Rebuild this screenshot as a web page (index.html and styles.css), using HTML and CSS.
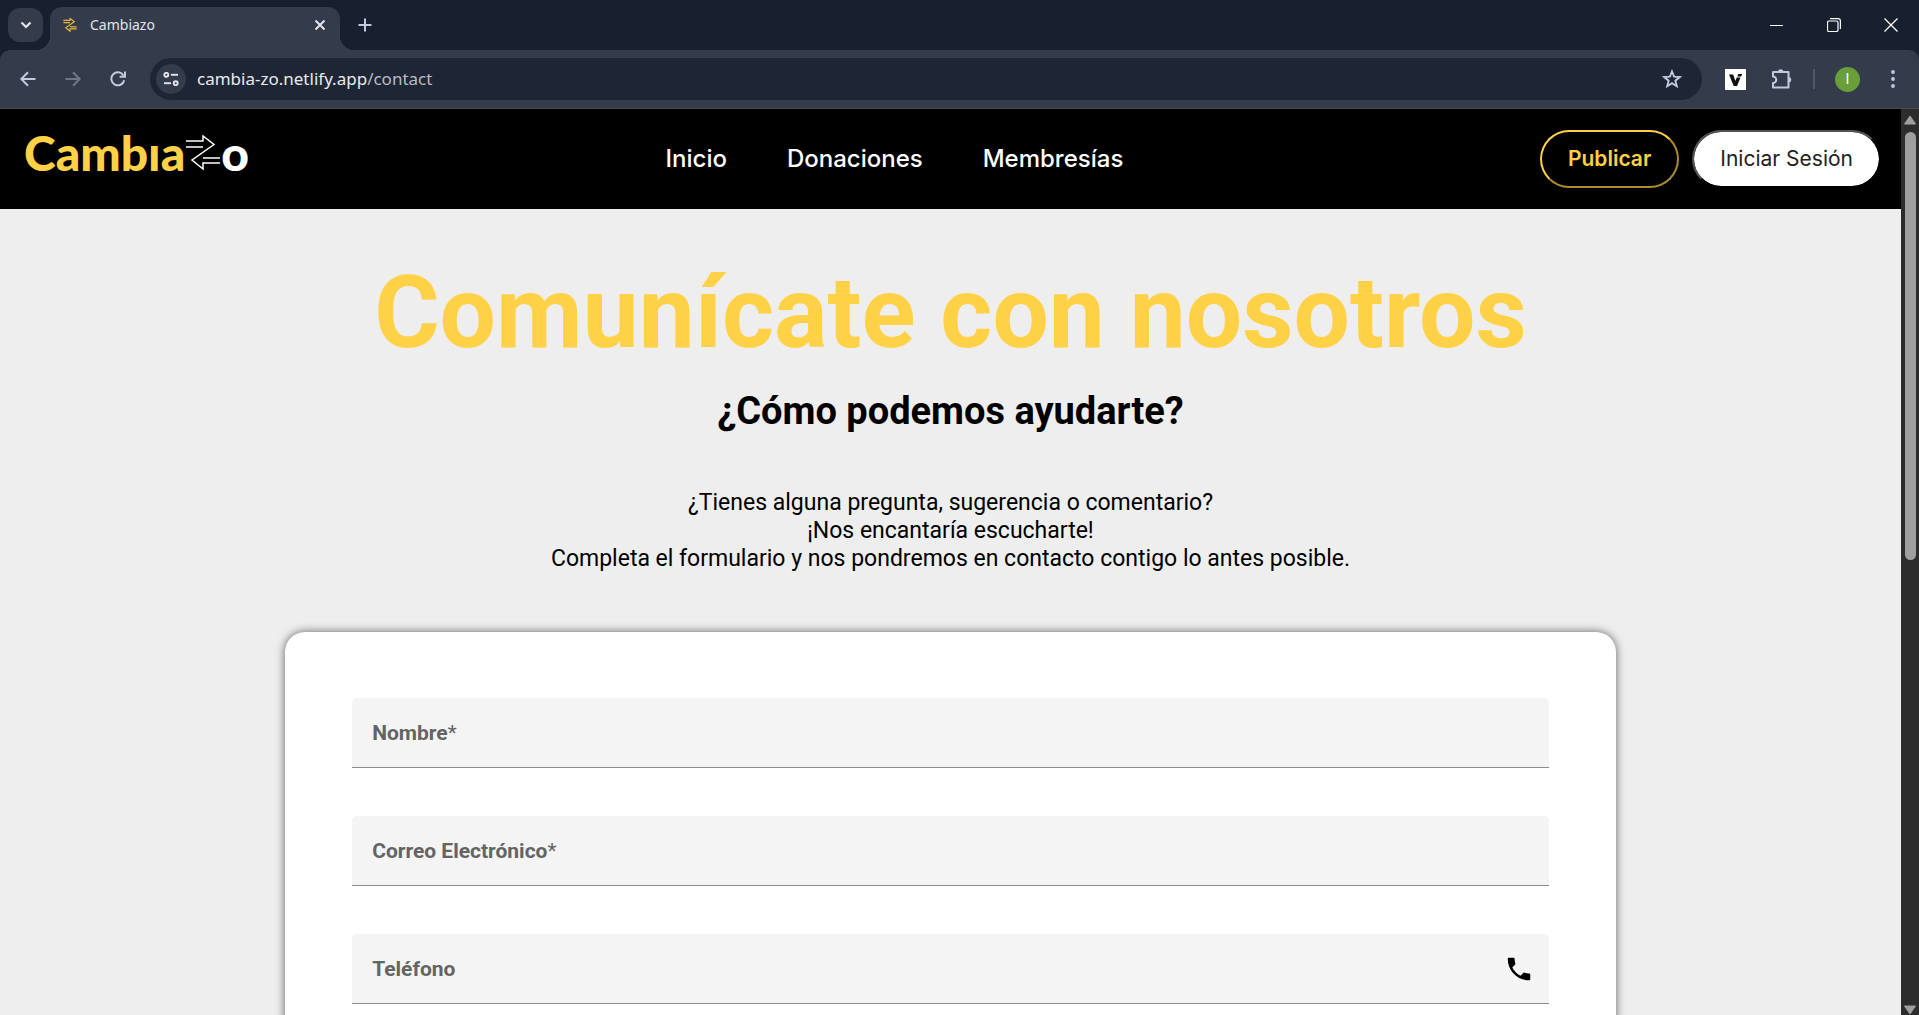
FILE: index.html
```html
<!DOCTYPE html>
<html lang="es">
<head>
<meta charset="utf-8">
<title>Cambiazo</title>
<link rel="stylesheet" href="styles.css">
</head>
<body>
<div class="browser">
  <div class="tabstrip">
    <button class="tab-search" aria-label="Buscar pestañas">
      <svg width="12" height="8" viewBox="0 0 12 8"><path d="M1.500 1.500 6 6l4.500-4.500" fill="none" stroke="currentColor" stroke-width="2.200"/></svg>
    </button>
    <div class="tab">
      <svg class="favicon" width="14" height="14" viewBox="0 0 36 36"><path d="M1 6h17V1l11 8.500L7 25l11 9v-6h17M1 12h17M35 23H18" fill="none" stroke="currentColor" stroke-width="3"/></svg>
      <span class="tab-title">Cambiazo</span>
      <button class="icon-btn" aria-label="Cerrar pestaña">
        <svg width="12" height="12" viewBox="0 0 12 12"><path d="M1.500 1.500l9 9M10.500 1.500l-9 9" stroke="currentColor" stroke-width="2"/></svg>
      </button>
    </div>
    <button class="icon-btn new-tab" aria-label="Nueva pestaña">
      <svg width="14" height="14" viewBox="0 0 14 14"><path d="M7 .5v13M.5 7h13" stroke="currentColor" stroke-width="2"/></svg>
    </button>
    <div class="window-controls">
      <button class="icon-btn" aria-label="Minimizar"><svg width="14" height="14" viewBox="0 0 14 14"><path d="M0 7.500h13" stroke="currentColor"/></svg></button>
      <button class="icon-btn" aria-label="Restaurar"><svg width="14" height="14" viewBox="0 0 14 14"><rect x=".5" y="3" width="10.500" height="10.500" rx="1.500" fill="none" stroke="currentColor" stroke-width="1.200"/><path d="M3 .6h8a2.400 2.400 0 0 1 2.400 2.400v8" fill="none" stroke="currentColor" stroke-width="1.200"/></svg></button>
      <button class="icon-btn" aria-label="Cerrar"><svg width="14" height="14" viewBox="0 0 14 14"><path d="M.5.5l13 13M13.500.5l-13 13" stroke="currentColor" stroke-width="1.300"/></svg></button>
    </div>
  </div>

  <div class="toolbar">
    <div class="nav-buttons">
      <button class="icon-btn" aria-label="Atrás"><svg width="16" height="16" viewBox="0 0 16 16"><path d="M15.500 8H1.500M8 1.200 1.300 8 8 14.800" fill="none" stroke="currentColor" stroke-width="2"/></svg></button>
      <button class="icon-btn is-off" aria-label="Adelante"><svg width="16" height="16" viewBox="0 0 16 16"><path d="M.5 8h14M8 1.200 14.700 8 8 14.800" fill="none" stroke="currentColor" stroke-width="2"/></svg></button>
      <button class="icon-btn" aria-label="Recargar"><svg width="16" height="16" viewBox="0 0 16 16"><path d="M14.200 9.200A6.500 6.500 0 1 1 13.500 4.600M15 .5v5.200H9.600" fill="none" stroke="currentColor" stroke-width="2"/></svg></button>
    </div>
    <div class="address-bar">
      <button class="site-info" aria-label="Información del sitio">
        <svg width="16" height="14" viewBox="0 0 16 14"><g fill="none" stroke="currentColor" stroke-width="1.900"><circle cx="3.300" cy="2.800" r="2"/><path d="M8 2.800h7"/><circle cx="12.700" cy="11.200" r="2"/><path d="M1 11.200h7"/></g></svg>
      </button>
      <div class="url">cambia-zo.netlify.app<span class="url-path">/contact</span></div>
      <button class="icon-btn" aria-label="Añadir a marcadores"><svg width="20" height="20" viewBox="0 0 20 20"><path d="M10 2.500l2.100 5.200 5.600.4-4.300 3.600 1.400 5.500-4.800-3-4.800 3 1.400-5.500L2.300 8.100l5.600-.4z" fill="none" stroke="currentColor" stroke-width="1.900"/></svg></button>
    </div>
    <div class="extensions">
      <button class="icon-btn" aria-label="Extensión V"><svg width="21" height="21" viewBox="0 0 21 21"><path fill="#fff" d="M0 0h21v21H0z"/><path fill="#111" d="M4 5.500h4.200l2.200 6.500 1.300-3.500h3.800L12 17H8.700zM12.300 7.500l1-2.500h3.900l-1 2.500z"/></svg></button>
      <button class="icon-btn" aria-label="Extensiones"><svg width="22" height="22" viewBox="0 0 22 22"><path d="M2 4H17.500V19.500H2V15a3.100 3.100 0 0 0 0-6.500z" fill="none" stroke="currentColor" stroke-width="2" stroke-linejoin="round"/><path d="M7 4a2.700 2.700 0 0 1 5.400 0zM17.500 9a2.700 2.700 0 0 1 0 5.400z" fill="currentColor"/></svg></button>
      <span class="divider"></span>
      <button class="avatar" aria-label="Perfil">I</button>
      <button class="icon-btn" aria-label="Menú"><svg width="4" height="18" viewBox="0 0 4 18"><g fill="currentColor"><circle cx="2" cy="2" r="1.900"/><circle cx="2" cy="9" r="1.900"/><circle cx="2" cy="16" r="1.900"/></g></svg></button>
    </div>
  </div>

  <div class="viewport">
    <div class="page">
      <header class="site-header">
        <a class="logo" href="#" aria-label="Cambiazo"><span>Cambıa</span><svg width="36" height="36" viewBox="0 0 36 36"><path d="M1 6h17V1l11 8.500L7 25l11 9v-6h17M1 12h17M35 23H18" fill="none" stroke="currentColor" stroke-width="1.500"/></svg><span class="logo-o">o</span></a>
        <nav class="site-nav">
          <a href="#">Inicio</a>
          <a href="#">Donaciones</a>
          <a href="#">Membresías</a>
        </nav>
        <div class="actions">
          <button class="btn btn-publish">Publicar</button>
          <button class="btn btn-login">Iniciar Sesión</button>
        </div>
      </header>
      <main class="contact">
        <h1>Comunícate con nosotros</h1>
        <h2>¿Cómo podemos ayudarte?</h2>
        <p class="intro">¿Tienes alguna pregunta, sugerencia o comentario?<br>¡Nos encantaría escucharte!<br>Completa el formulario y nos pondremos en contacto contigo lo antes posible.</p>
        <form class="card">
          <div class="field">
            <label for="nombre">Nombre<span class="required">*</span></label>
            <input id="nombre" type="text" required>
          </div>
          <div class="field">
            <label for="correo">Correo Electrónico<span class="required">*</span></label>
            <input id="correo" type="email" required>
          </div>
          <div class="field">
            <label for="telefono">Teléfono</label>
            <input id="telefono" type="tel">
            <svg width="30" height="30" viewBox="0 0 24 24"><path d="M6.620 10.790c1.440 2.830 3.760 5.140 6.590 6.590l2.200-2.200c.27-.27.670-.36 1.020-.24 1.120.37 2.330.57 3.570.57.550 0 1 .45 1 1V20c0 .55-.45 1-1 1C10.610 21 3 13.390 3 4c0-.55.450-1 1-1h3.500c.55 0 1 .45 1 1 0 1.250.2 2.450.57 3.570.11.350.03.740-.25 1.020z"/></svg>
          </div>
        </form>
      </main>
    </div>
    <div class="scrollbar">
      <svg width="14" height="10" viewBox="0 0 14 10"><path d="M7 1l5.500 8h-11z" fill="#9f9f9f" stroke="#9f9f9f" stroke-linejoin="round"/></svg>
      <div class="track"><div class="thumb"></div></div>
      <svg width="14" height="10" viewBox="0 0 14 10"><path d="M7 9l5.500-8h-11z" fill="#9f9f9f" stroke="#9f9f9f" stroke-linejoin="round"/></svg>
    </div>
  </div>
</div>
</body>
</html>
```
FILE: styles.css
```css
* { box-sizing: border-box; }

body {
  margin: 0;
  font-family: Roboto, sans-serif;
  color: #000;
}

svg { display: block; flex: none; }
button { margin: 0; padding: 0; border: 0; background: none; font: inherit; color: inherit; }
a { color: inherit; text-decoration: none; }

.browser {
  display: flex;
  flex-direction: column;
  height: 100vh;
  overflow: hidden;
  background: #18202f;
}

.icon-btn {
  display: flex;
  align-items: center;
  justify-content: center;
  flex: none;
}

/* Tab strip */
.tabstrip {
  display: flex;
  align-items: center;
  height: 50px;
  flex: none;
  padding-left: 8px;
  font-family: "Noto Sans", sans-serif;
  color: #e3e5ec;
}
.tab-search {
  display: flex;
  align-items: center;
  justify-content: center;
  width: 35px;
  height: 34px;
  border-radius: 12px;
  background: #343b4b;
}
.tab {
  position: relative;
  align-self: flex-end;
  display: flex;
  align-items: center;
  width: 290px;
  height: 43px;
  margin-left: 7px;
  padding: 0 14px 8px 13px;
  border-radius: 12px 12px 0 0;
  background: #343b4b;
}
.tab::before,
.tab::after {
  content: "";
  position: absolute;
  bottom: 0;
  width: 14px;
  height: 14px;
}
.tab::before { right: 100%; background: radial-gradient(circle at 0 0, transparent 14px, #343b4b 14px); }
.tab::after { left: 100%; background: radial-gradient(circle at 100% 0, transparent 14px, #343b4b 14px); }
.favicon { color: #e3b93f; }
.tab-title { flex: 1; margin-left: 13px; font-size: 14px; line-height: 20px; }
.new-tab { margin-left: 18px; color: #c3c9de; }
.window-controls {
  display: flex;
  gap: 43px;
  margin-left: auto;
  padding-right: 21px;
  color: #fff;
}

/* Toolbar */
.toolbar {
  display: flex;
  align-items: center;
  height: 59px;
  flex: none;
  padding: 0 24px 0 20px;
  border-bottom: 1px solid #484c53;
  border-radius: 10px 10px 0 0;
  background: #343b4b;
  color: #c3c9de;
}
.nav-buttons { display: flex; gap: 29px; }
.is-off { color: #717787; }
.address-bar {
  display: flex;
  align-items: center;
  flex: 1;
  height: 42px;
  margin-left: 24px;
  padding: 0 20px 0 6px;
  border-radius: 21px;
  background: #1e2636;
  font-family: "Noto Sans", sans-serif;
}
.site-info {
  display: flex;
  align-items: center;
  justify-content: center;
  width: 30px;
  height: 30px;
  border-radius: 50%;
  background: #343b4b;
  color: #e3e5ec;
}
.url { flex: 1; margin-left: 11px; font-size: 17px; line-height: 24px; color: #e8eaf0; }
.url-path { color: #b9bcc4; }
.extensions { display: flex; align-items: center; margin-left: 23px; gap: 20px; }
.extensions .icon-btn:nth-child(1) { margin-right: 5px; }
.divider { width: 2px; height: 20px; background: #515868; }
.avatar {
  width: 25px;
  height: 25px;
  border-radius: 50%;
  background: #689f38;
  color: #fff;
  font-size: 14px;
  line-height: 25px;
}
.extensions .icon-btn:last-child { margin-left: 11px; }

/* Page area with its scrollbar */
.viewport { display: flex; flex: 1; min-height: 0; }
.page { flex: 1; overflow: hidden; background: #eee; }
.scrollbar {
  display: flex;
  flex-direction: column;
  align-items: center;
  width: 18px;
  flex: none;
  padding: 6px 0 0;
  background: #2c2c2c;
}
.track { flex: 1; padding-top: 7px; }
.thumb { width: 11px; height: 49%; border-radius: 6px; background: #9f9f9f; }

/* Site header */
.site-header {
  display: flex;
  justify-content: space-between;
  align-items: center;
  height: 100px;
  padding: 0 20px 0 24px;
  background: #000;
  color: #fff;
  font-family: Inter, sans-serif;
}
.logo {
  display: flex;
  align-items: center;
  padding-bottom: 12px;
  color: #fff;
  font-family: Lato, sans-serif;
  font-size: 48px;
  font-weight: 900;
  line-height: 56px;
}
.logo span { color: #ffd146; }
.logo .logo-o { color: #fff; }
.site-nav { display: flex; gap: 60px; font-size: 24px; font-weight: 500; line-height: 32px; }
.actions { display: flex; gap: 13px; }
.btn {
  height: 58px;
  padding: 0 26px;
  border-radius: 29px;
  font-size: 21px;
  line-height: 24px;
}
.btn-publish { border: 2px outset #ffd146; color: #ffd146; font-weight: 600; }
.btn-login { border: 2px outset #000; background: #fff; background-clip: padding-box; color: #212121; }

/* Contact section */
.contact { display: flex; flex-direction: column; align-items: center; text-align: center; }
h1 { margin: 44px 0 0; color: #ffd146; font-size: 100px; font-weight: 700; line-height: 120px; }
h2 { margin: 14px 0 0; font-size: 38px; font-weight: 700; line-height: 48px; }
.intro { margin: 54px 0 0; font-size: 23px; line-height: 28px; }
.card {
  display: flex;
  flex-direction: column;
  gap: 48px;
  width: 70%;
  margin-top: 59px;
  padding: 66px 67px;
  border-radius: 20px;
  background: #fff;
  box-shadow: 0 0 10px rgba(0, 0, 0, 0.6);
}
.field {
  display: flex;
  align-items: center;
  height: 70px;
  padding: 0 15px 0 20px;
  border-bottom: 1px solid #8c8c8c;
  border-radius: 5px 5px 0 0;
  background: #f4f4f4;
}
.field label { color: #646464; font-size: 21px; font-weight: 700; line-height: 30px; }
.required { font-weight: 400; }
.field input { flex: 1; min-width: 0; border: 0; outline: 0; background: none; font: inherit; font-size: 21px; }
```
